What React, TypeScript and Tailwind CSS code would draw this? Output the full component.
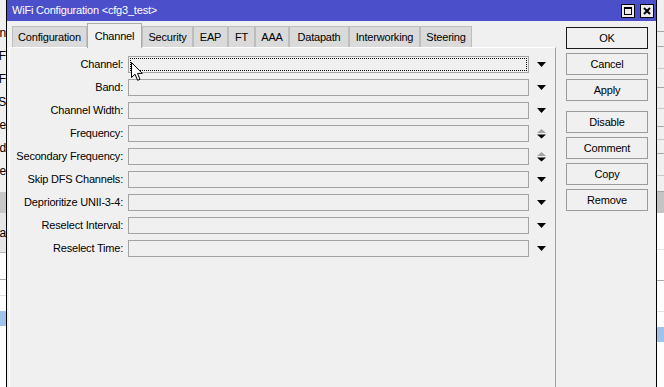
import React from "react";

const tabs = [
  { name: "Configuration", w: "w-[75px]" },
  { name: "Channel", w: "w-[55px]", active: true },
  { name: "Security", w: "w-[51px]" },
  { name: "EAP", w: "w-[35px]" },
  { name: "FT", w: "w-[27px]" },
  { name: "AAA", w: "w-[34px]" },
  { name: "Datapath", w: "w-[60px]" },
  { name: "Interworking", w: "w-[71px]" },
  { name: "Steering", w: "w-[52px]" },
];

const fields = [
  { label: "Channel:", kind: "drop", focus: true },
  { label: "Band:", kind: "drop" },
  { label: "Channel Width:", kind: "drop" },
  { label: "Frequency:", kind: "spin" },
  { label: "Secondary Frequency:", kind: "spin" },
  { label: "Skip DFS Channels:", kind: "drop" },
  { label: "Deprioritize UNII-3-4:", kind: "drop" },
  { label: "Reselect Interval:", kind: "drop" },
  { label: "Reselect Time:", kind: "drop" },
];

const leftBits = ["n", "F", "F", "S", "ce", "ed", "se"];

const DropArrow = () => (
  <svg width="9" height="5" viewBox="0 0 9 5">
    <path d="M0 0 H9 L4.5 5 Z" fill="#000" />
  </svg>
);

const SpinArrows = () => (
  <svg width="9" height="10" viewBox="0 0 9 10">
    <path d="M4.5 0 L9 4 H0 Z" fill="#a3a3a3" />
    <path d="M0 5.5 H9 L4.5 9.5 Z" fill="#000" />
  </svg>
);

const Cursor = () => (
  <svg width="13" height="20" viewBox="0 0 13 20">
    <path
      d="M0.5 0.5 L0.5 15.5 L4 12.2 L6.6 18.3 L9 17.3 L6.5 11.4 L11.3 11.4 Z"
      fill="#fff"
      stroke="#000"
      strokeWidth="1"
      strokeLinejoin="round"
    />
  </svg>
);

const Btn = ({ label, primary, extra }: { label: string; primary?: boolean; extra?: string }) => (
  <div
    className={`flex h-[22px] w-[82px] items-center justify-center bg-[#f0f0f0] ${
      primary ? "border border-[#1b1b1b]" : "border border-[#9b9b9b]"
    } ${extra ?? ""}`}
  >
    {label}
  </div>
);

export default function App() {
  return (
    <div
      className="flex h-[387px] w-[664px] overflow-hidden bg-white text-[11px] tracking-[-0.2px] text-black"
      style={{ fontFamily: '"Liberation Sans", Arial, sans-serif' }}
    >
      {/* ---- window behind, left edge ---- */}
      <div className="flex w-[6px] shrink-0 flex-col">
        <div className="h-[21px] bg-[#f0f0f0]" />
        {leftBits.map((b, i) => (
          <div key={i} className="flex h-[23px] items-center justify-end overflow-hidden whitespace-nowrap bg-[#f0f0f0] text-[12px]">
            {b}
          </div>
        ))}
        <div className="h-[10px] bg-[#f0f0f0]" />
        <div className="h-[21px] bg-[#c8c8c8]" />
        <div className="flex h-[40px] items-center justify-end overflow-hidden whitespace-nowrap border-b border-[#b5b5b5] bg-[#e6e6e6] text-[12px]">
          ta
        </div>
        <div className="h-[27px] border-b border-[#a8a8a8] bg-white" />
        <div className="h-[16px] border-b border-[#e0e0e0] bg-white" />
        <div className="h-[15px] bg-white" />
        <div className="h-[15px] bg-[#a0c3ec]" />
        <div className="flex-1 bg-white" />
      </div>

      {/* ---- WiFi Configuration window ---- */}
      <div className="relative flex w-[651px] shrink-0 flex-col border-x border-black bg-[#f0f0f0]">
        <div className="flex h-[21px] items-center justify-between bg-[#4b4fca] pl-[5px] pr-[2px]">
          <span className="text-white">WiFi Configuration &lt;cfg3_test&gt;</span>
          <div className="flex gap-[5px]">
            <div className="flex h-[14px] w-[14px] items-center justify-center border border-black bg-[#ececec]">
              <div className="h-[8px] w-[8px] border border-t-2 border-black" />
            </div>
            <div className="flex h-[14px] w-[14px] items-center justify-center border border-black bg-[#ececec]">
              <svg width="8" height="8" viewBox="0 0 8 8">
                <path d="M1 1 L7 7 M7 1 L1 7" stroke="#000" strokeWidth="2" />
              </svg>
            </div>
          </div>
        </div>

        <div className="flex flex-1">
          {/* ---- tabs + panel ---- */}
          <div className="flex w-[549px] flex-col">
            <div className="flex h-[26px] items-end pl-[5px]">
              {tabs.map((t) =>
                t.active ? (
                  <div
                    key={t.name}
                    className={`relative z-10 -mb-px flex h-[25px] ${t.w} items-start justify-center border-x border-t border-[#adadad] bg-[#f0f0f0] pt-[4px]`}
                  >
                    {t.name}
                  </div>
                ) : (
                  <div
                    key={t.name}
                    className={`flex h-[21px] ${t.w} items-center justify-center border-x border-t border-[#bdbdbd] bg-[#dadada] pt-px`}
                  >
                    {t.name}
                  </div>
                )
              )}
            </div>
            <div className="ml-[2px] flex flex-1 flex-col gap-[6px] border-l border-t border-r border-l-white border-t-white border-r-[#a0a0a0] pt-[8px]">
              {fields.map((f) => (
                <div key={f.label} className="flex h-[17px] items-center">
                  <div className="w-[113px] whitespace-nowrap text-right">{f.label}</div>
                  <div className="relative ml-[5px] h-[17px] w-[401px] border border-[#a3a3a3]">
                    {f.focus && <div className="absolute inset-px border border-dotted border-black" />}
                  </div>
                  <div className="ml-[8px] flex w-[9px] items-center">
                    {f.kind === "spin" ? <SpinArrows /> : <DropArrow />}
                  </div>
                </div>
              ))}
            </div>
          </div>

          {/* ---- buttons ---- */}
          <div className="ml-[10px] flex flex-col gap-[4px] pt-[6px]">
            <Btn label="OK" primary />
            <Btn label="Cancel" />
            <Btn label="Apply" />
            <Btn label="Disable" extra="mt-[6px]" />
            <Btn label="Comment" />
            <Btn label="Copy" />
            <Btn label="Remove" />
          </div>
        </div>

        {/* mouse pointer over the Channel field */}
        <div className="absolute left-[124px] top-[62px]">
          <Cursor />
        </div>
      </div>

      {/* ---- window behind, right edge ---- */}
      <div className="flex w-[7px] shrink-0 flex-col">
        <div className="h-[32px] border-b border-[#a8a8a8] bg-[#f0f0f0]" />
        <div className="h-[15px] border-b border-[#a8a8a8] bg-[#f0f0f0]" />
        <div className="h-[22px] border-b border-[#c8c8c8] bg-[#f0f0f0]" />
        <div className="h-[19px] border-b border-[#a8a8a8] bg-[#f0f0f0]" />
        <div className="h-[21px] border-b border-[#c8c8c8] bg-[#f0f0f0]" />
        <div className="h-[18px] border-b border-[#a8a8a8] bg-[#f0f0f0]" />
        <div className="h-[13px] border-b border-[#c8c8c8] bg-[#f0f0f0]" />
        <div className="h-[14px] border-b border-[#a8a8a8] bg-[#f0f0f0]" />
        <div className="h-[22px] border-b border-[#c8c8c8] bg-[#f0f0f0]" />
        <div className="h-[16px] border-b border-[#a8a8a8] bg-[#f0f0f0]" />
        <div className="h-[21px] bg-[#c4c4c4]" />
        <div className="h-[37px] border-b border-[#e0e0e0] bg-white" />
        <div className="h-[31px] border-b border-[#a8a8a8] bg-white" />
        <div className="h-[31px] border-b border-[#e0e0e0] bg-white" />
        <div className="h-[15px] bg-white" />
        <div className="h-[15px] bg-[#a0c3ec]" />
        <div className="flex-1 bg-white" />
      </div>
    </div>
  );
}
